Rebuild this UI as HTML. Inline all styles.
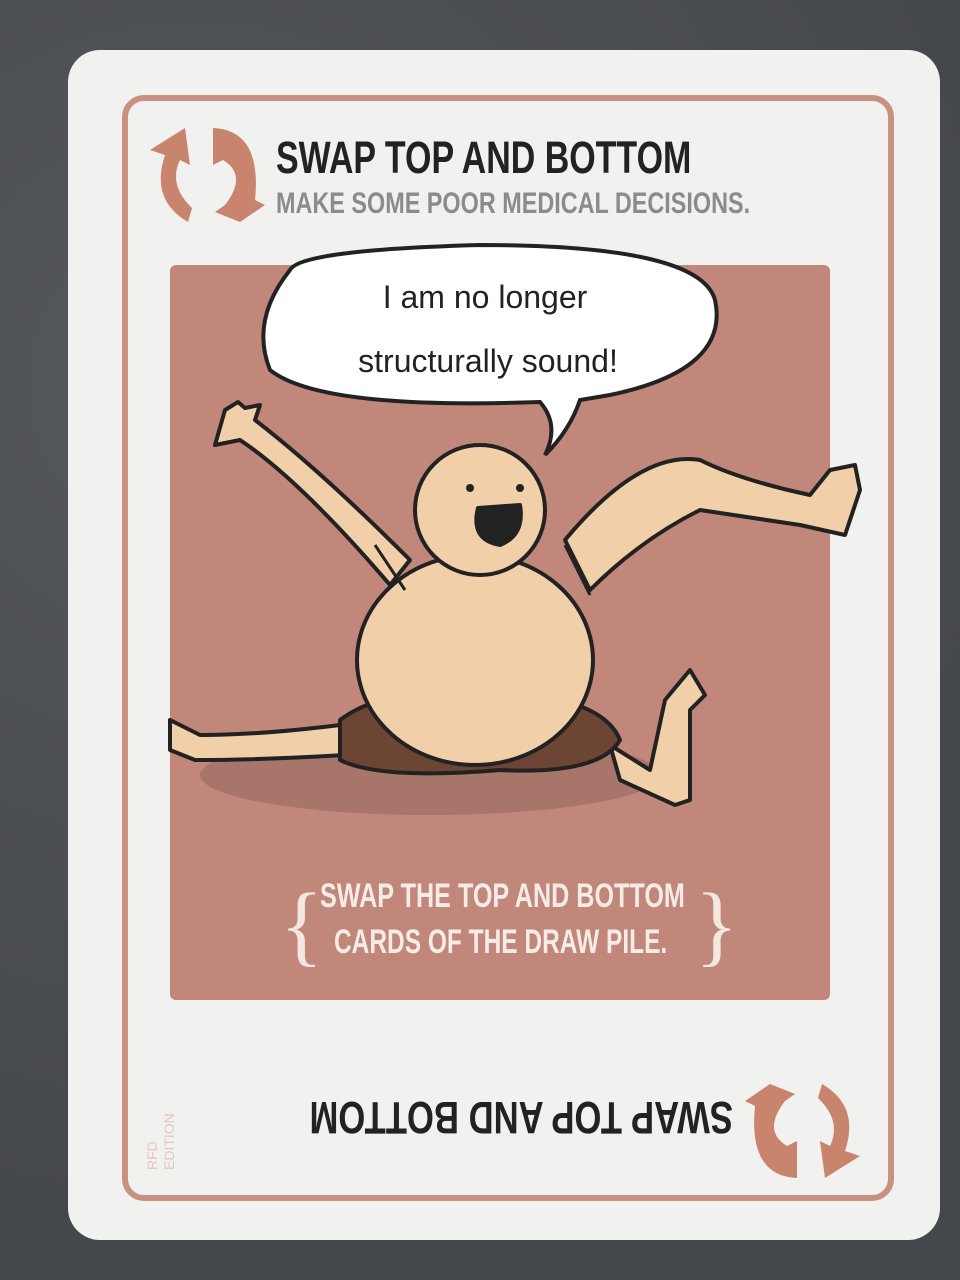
<!DOCTYPE html>
<html><head><meta charset="utf-8"><style>
html,body{margin:0;padding:0;width:960px;height:1280px;overflow:hidden;background:#4b4e52;}
body{position:relative;font-family:"Liberation Sans",sans-serif;}
.card{position:absolute;left:68px;top:50px;width:872px;height:1190px;background:#f1f1ef;border-radius:32px;}
.frame{position:absolute;left:122px;top:95px;width:760px;height:1094px;border:6px solid #c9917f;border-radius:22px;}
.t{position:absolute;font-weight:bold;white-space:nowrap;transform-origin:0 0;}
.panel{position:absolute;left:170px;top:265px;width:660px;height:735px;background:#c0877a;border-radius:6px;}
</style></head><body>
<div style="position:absolute;inset:0;background:radial-gradient(circle at 20% 30%,#55585c,#45484b 70%);"></div>
<div class="card"></div>
<div class="frame"></div>
<div class="panel"></div>
<div class="t" style="left:276px;top:132px;font-size:45px;color:#222;transform:scaleX(0.755);">SWAP TOP AND BOTTOM</div>
<div class="t" style="left:276px;top:187px;font-size:30px;color:#8b8b8b;transform:scaleX(0.78);">MAKE SOME POOR MEDICAL DECISIONS.</div>
<svg style="position:absolute;left:0;top:0" width="960" height="1280">
 <g fill="#c9846e">
  <path d="M150 150 L185 128 L190 165 L180 160 Q168 185 192 208 L188 222 Q150 200 165 155 Z"/>
  <path d="M213 128 Q262 130 255 200 L265 205 L240 222 L215 212 L225 205 Q248 175 223 160 L213 165 Z"/>
 </g>
 <g fill="#c9846e" transform="rotate(180 805 1112)">
  <path d="M750 1068 L785 1046 L790 1083 L780 1078 Q768 1103 792 1126 L788 1140 Q750 1118 765 1073 Z"/>
  <path d="M813 1046 Q862 1048 855 1118 L865 1123 L840 1140 L815 1130 L825 1123 Q848 1093 823 1078 L813 1083 Z"/>
 </g>
 <path d="M290 270 Q300 250 480 245 Q700 245 715 300 Q730 370 610 395 L580 400 Q570 430 545 455 Q560 425 540 402 Q320 410 270 370 Q250 320 290 270 Z" fill="#fff" stroke="#222" stroke-width="4"/>
 <text x="485" y="308" text-anchor="middle" font-family="Liberation Sans,sans-serif" font-size="32" fill="#222">I am no longer</text>
 <text x="488" y="372" text-anchor="middle" font-family="Liberation Sans,sans-serif" font-size="32" fill="#222">structurally sound!</text>
 <ellipse cx="430" cy="775" rx="230" ry="40" fill="#a8756a"/>
 <g stroke="#222" stroke-width="4" fill="#f1cfa9" stroke-linejoin="round">
  <path d="M225 410 L215 445 L240 440 Q300 480 390 585 L410 560 Q320 470 255 420 L260 405 L245 408 L238 402 Z"/>
  <path d="M565 540 Q640 450 700 460 Q740 480 810 495 L830 470 L855 465 L860 490 L845 535 L800 525 L700 510 Q640 540 590 590 Z"/>
  <path d="M170 720 L200 735 Q260 735 340 725 L345 755 Q260 760 195 760 L170 750 Z"/>
  <path d="M610 745 L650 770 L665 700 L690 670 L705 695 L690 710 L690 800 L675 805 L620 780 Z"/>
  <path d="M340 720 Q380 690 460 690 Q600 690 620 740 Q600 775 500 770 Q380 780 340 760 Z" fill="#6d4534"/>
  <ellipse cx="475" cy="660" rx="118" ry="105"/>
  <circle cx="480" cy="510" r="65"/>
  <path d="M478 508 Q470 540 500 545 Q525 535 520 505 Z" fill="#222"/>
 </g>
 <path d="M375 545 L405 590 M565 545 L590 595" stroke="#222" stroke-width="3" fill="none"/>
 <circle cx="470" cy="488" r="4" fill="#222"/><circle cx="520" cy="488" r="4" fill="#222"/>
 <text x="280" y="955" font-family="Liberation Serif,serif" font-size="90" fill="#f3e7e0">{</text>
 <text x="695" y="955" font-family="Liberation Serif,serif" font-size="90" fill="#f3e7e0">}</text>
</svg>
<div class="t" style="left:320px;top:877px;font-size:34px;color:#f6ece6;transform:scaleX(0.74);">SWAP THE TOP AND BOTTOM</div>
<div class="t" style="left:334px;top:923px;font-size:34px;color:#f6ece6;transform:scaleX(0.72);">CARDS OF THE DRAW PILE.</div>
<div class="t" style="left:733px;top:1143px;font-size:45px;color:#222;transform:rotate(180deg) scaleX(0.77);">SWAP TOP AND BOTTOM</div>
<div class="t" style="left:144px;top:1170px;font-size:14px;color:#e4c7bb;font-weight:normal;transform:rotate(-90deg);line-height:17px;">RFD<br>EDITION</div>
</body></html>
